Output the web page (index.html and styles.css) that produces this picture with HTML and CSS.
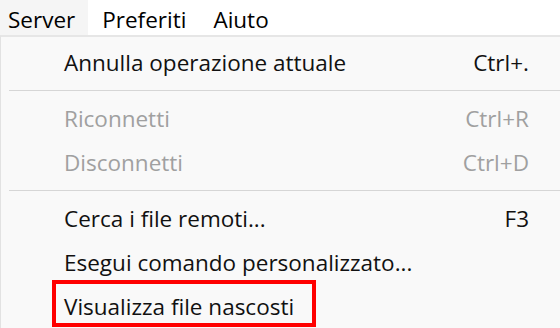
FILE: index.html
```html
<!DOCTYPE html>
<html lang="it">
<head>
    <meta charset="UTF-8">
    <title>Menu Server</title>
    <link rel="stylesheet" href="styles.css">
</head>
<body>
    <div class="menubar">
        <div class="menubar-item open">Server</div>
        <div class="menubar-item">Preferiti</div>
        <div class="menubar-item">Aiuto</div>
    </div>

    <div class="menu">
        <div class="menu-item">
            <span class="label">Annulla operazione attuale</span>
            <span class="shortcut">Ctrl+.</span>
        </div>
        <div class="separator"></div>
        <div class="menu-item disabled">
            <span class="label">Riconnetti</span>
            <span class="shortcut">Ctrl+R</span>
        </div>
        <div class="menu-item disabled">
            <span class="label">Disconnetti</span>
            <span class="shortcut">Ctrl+D</span>
        </div>
        <div class="separator"></div>
        <div class="menu-item">
            <span class="label">Cerca i file remoti...</span>
            <span class="shortcut">F3</span>
        </div>
        <div class="menu-item">
            <span class="label">Esegui comando personalizzato...</span>
        </div>
        <div class="menu-item highlighted">
            <span class="label">Visualizza file nascosti</span>
        </div>
    </div>
</body>
</html>
```

FILE: styles.css
```css
* {
    margin: 0;
    padding: 0;
    box-sizing: border-box;
}

body {
    width: 560px;
    height: 328px;
    overflow: hidden;
    background: #f9f9f9;
    color: #111111;
    font-family: "Open Sans", "Noto Sans", sans-serif;
    font-size: 22.5px;
}

.menubar {
    display: flex;
    height: 35px;
    background: #ffffff;
}

.menubar-item {
    display: flex;
    align-items: center;
    padding: 3px 13px 0 14px;
    color: #000000;
}

.menubar-item:first-child {
    padding-left: 8px;
}

.menubar-item.open {
    background: #f5f5f5;
}

.menu {
    border-top: 2px solid #e6e6e6;
    border-left: 1px solid #e2e2e2;
    padding-top: 7px;
}

.menu-item {
    display: flex;
    align-items: center;
    justify-content: space-between;
    height: 44px;
    padding: 0 31px 8px 63px;
}

.menu-item.disabled {
    color: #a0a0a0;
}

.separator {
    height: 12px;
    margin-left: 8px;
    padding-top: 2px;
}

.separator::before {
    content: "";
    display: block;
    height: 1px;
    background: #d6d6d6;
}

.menu-item.highlighted {
    position: relative;
}

/* red marker drawn over the last entry */
.menu-item.highlighted::after {
    content: "";
    position: absolute;
    left: 51px;
    top: -8px;
    width: 264px;
    height: 47px;
    box-sizing: border-box;
    border: 4px solid #ff0000;
}
```
